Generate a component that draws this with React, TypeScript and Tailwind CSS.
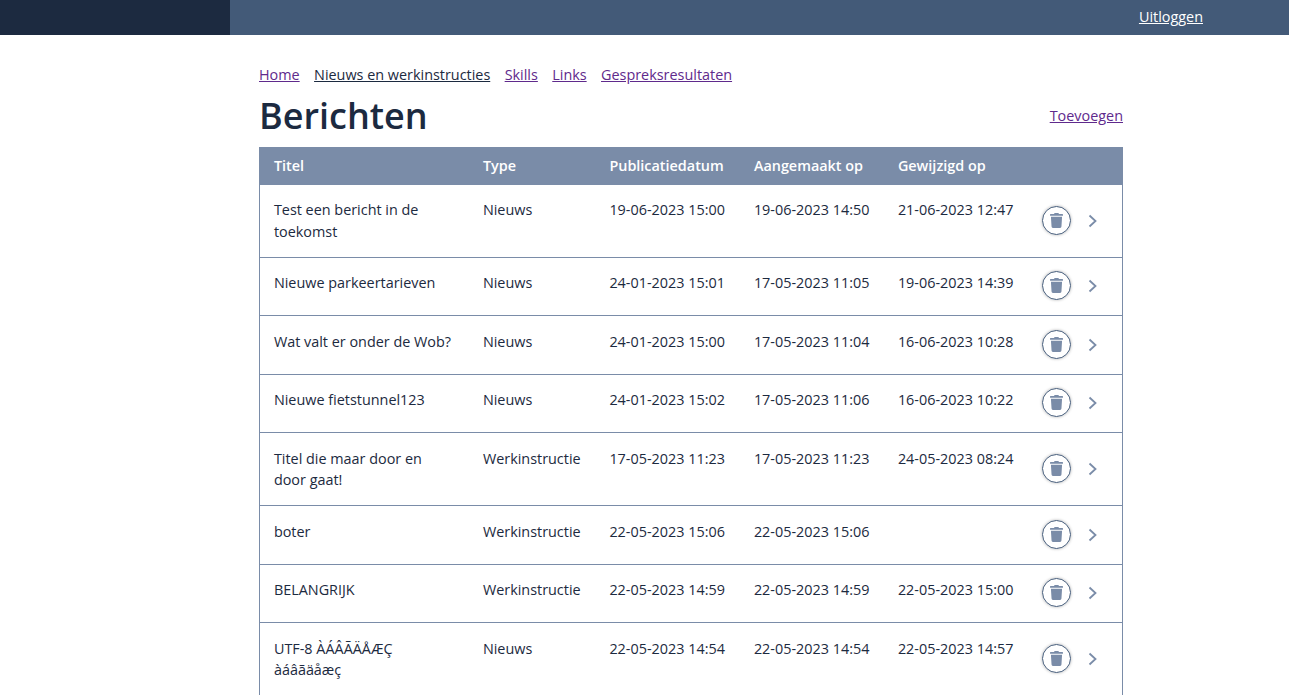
import { FaTrash } from 'react-icons/fa';

const NAV = [
  { label: 'Home', active: false },
  { label: 'Nieuws en werkinstructies', active: true },
  { label: 'Skills', active: false },
  { label: 'Links', active: false },
  { label: 'Gespreksresultaten', active: false },
];

const ROWS = [
  ['Test een bericht in de toekomst', 'Nieuws', '19-06-2023 15:00', '19-06-2023 14:50', '21-06-2023 12:47'],
  ['Nieuwe parkeertarieven', 'Nieuws', '24-01-2023 15:01', '17-05-2023 11:05', '19-06-2023 14:39'],
  ['Wat valt er onder de Wob?', 'Nieuws', '24-01-2023 15:00', '17-05-2023 11:04', '16-06-2023 10:28'],
  ['Nieuwe fietstunnel123', 'Nieuws', '24-01-2023 15:02', '17-05-2023 11:06', '16-06-2023 10:22'],
  ['Titel die maar door en door gaat!', 'Werkinstructie', '17-05-2023 11:23', '17-05-2023 11:23', '24-05-2023 08:24'],
  ['boter', 'Werkinstructie', '22-05-2023 15:06', '22-05-2023 15:06', ''],
  ['BELANGRIJK', 'Werkinstructie', '22-05-2023 14:59', '22-05-2023 14:59', '22-05-2023 15:00'],
  ['UTF-8 ÀÁÂÃÄÅÆÇ àáâãäåæç', 'Nieuws', '22-05-2023 14:54', '22-05-2023 14:54', '22-05-2023 14:57'],
];

const HEADERS = ['Titel', 'Type', 'Publicatiedatum', 'Aangemaakt op', 'Gewijzigd op', ''];

export default function App() {
  return (
    <div className="h-[695px] overflow-hidden bg-white font-['Open_Sans',sans-serif] text-[14.4px] leading-[21.6px] text-[#1c2a40]">
      {/* Top bar */}
      <header className="flex h-[35px] bg-[#435a78]">
        <div className="w-[230px] bg-[#1c2a40]" />
        <div className="flex flex-1 items-start justify-end pt-[6px] pr-[86px]">
          <a href="#" className="text-white underline">Uitloggen</a>
        </div>
      </header>

      <main className="ml-[259px] w-[864px] pt-[29px]">
        <nav className="flex gap-[14.4px]">
          {NAV.map((item) => (
            <a
              key={item.label}
              href="#"
              className={item.active ? 'text-[#1c2a40] underline' : 'text-[#5f2a8c] underline'}
            >
              {item.label}
            </a>
          ))}
        </nav>

        <div className="mt-[6px] mb-[7px] flex items-center justify-between">
          <h1 className="text-[36px] leading-[48px] font-semibold">Berichten</h1>
          <a href="#" className="text-[#5f2a8c] underline">Toevoegen</a>
        </div>

        <table className="-ml-[0.5px] w-[863.5px] table-fixed border-collapse">
          <colgroup>
            <col className="w-[209.5px]" />
            <col className="w-[126.5px]" />
            <col className="w-[144.5px]" />
            <col className="w-[144px]" />
            <col className="w-[144px]" />
            <col className="w-[95px]" />
          </colgroup>
          <thead>
            <tr className="h-[37px] border border-[#7a8ca8] bg-[#7a8ca8] text-left text-white">
              {HEADERS.map((h, i) => (
                <th key={i} className="px-[14.4px] py-0 font-semibold">{h}</th>
              ))}
            </tr>
          </thead>
          <tbody>
            {ROWS.map((row) => (
              <tr key={row[0]} className="h-[58.5px] border border-[#7a8ca8]">
                {row.map((cell, i) => (
                  <td key={i} className={i > 1 ? 'px-[14.4px] pt-[14.7px] pb-[14.1px] align-top whitespace-nowrap' : 'px-[14.4px] pt-[14.7px] pb-[14.1px] align-top'}>{cell}</td>
                ))}
                <td className="px-[14.4px] py-0 align-middle">
                  <div className="mb-[1px] flex items-center">
                    <button className="flex h-[29px] w-[29px] shrink-0 items-center justify-center rounded-full border border-[#435a78] shadow-[0_0_3px_rgba(0,0,0,0.3)]">
                      <FaTrash className="h-[15px] w-[13px] text-[#7a8ca8]" />
                    </button>
                    <svg viewBox="0 0 10 14" className="mt-[1px] ml-[17px] h-[14px] w-[10px] shrink-0 text-[#7a8ca8]" fill="none" stroke="currentColor" strokeWidth="1.8">
                      <path d="M1.5 1.5 L7.5 7 L1.5 12.5" />
                    </svg>
                  </div>
                </td>
              </tr>
            ))}
          </tbody>
        </table>
      </main>
    </div>
  );
}
